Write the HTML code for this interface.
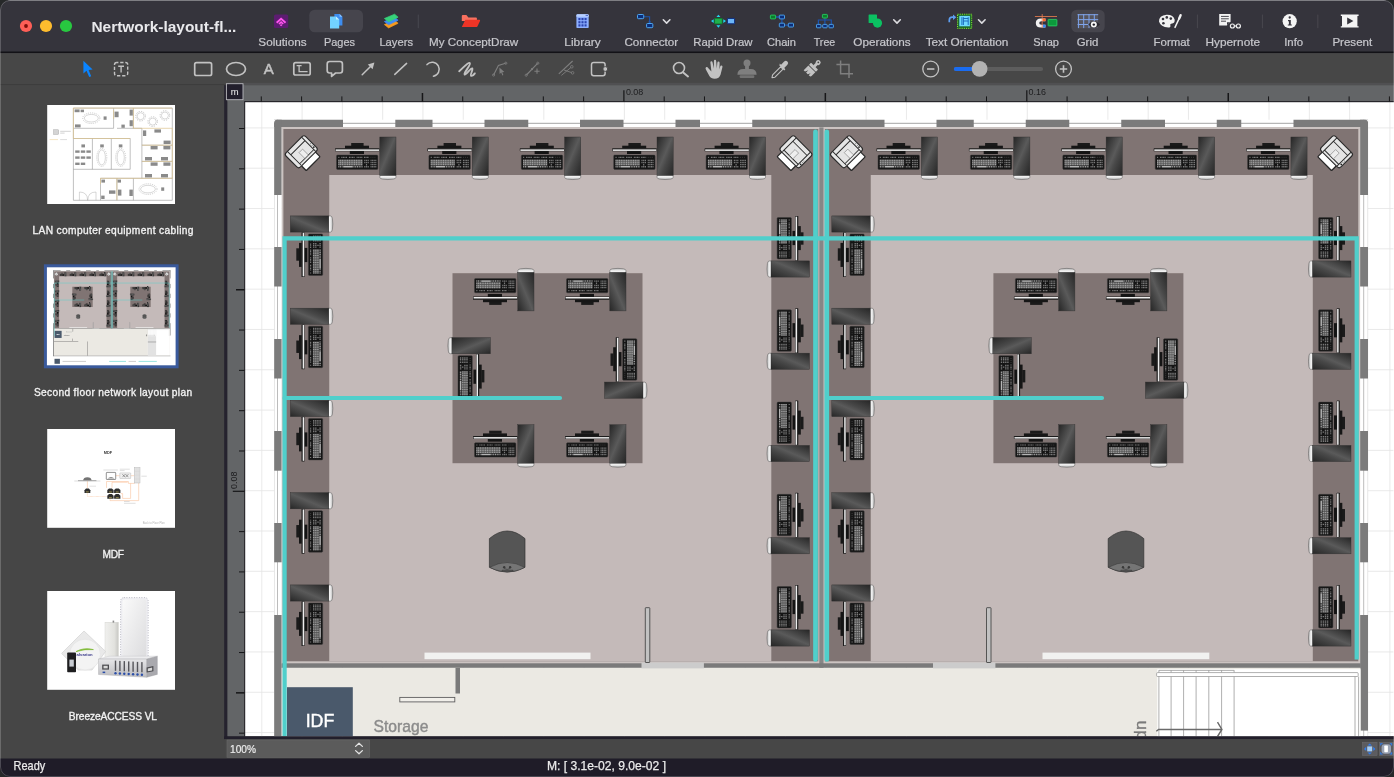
<!DOCTYPE html>
<html lang="en"><head><meta charset="utf-8"><title>Nertwork-layout-floor-plan</title>
<style>
html,body{margin:0;padding:0;background:#262829;}
body{width:1394px;height:777px;overflow:hidden;position:relative;}
svg{display:block;position:absolute;left:0;top:0;will-change:transform;}
text{font-family:"Liberation Sans",sans-serif;}
.lbl{font-size:11.3px;fill:#c6c6cb;text-anchor:middle;stroke:#c6c6cb;stroke-width:0.22px;}
.side{font-size:10.2px;fill:#f2f2f2;text-anchor:middle;stroke:#f2f2f2;stroke-width:0.33px;}
.rul{font-size:9.4px;fill:#1d1d1f;}
</style></head>
<body>
<svg width="1394" height="777" viewBox="0 0 1394 777">
<defs><clipPath id="win"><rect x="0" y="0" width="1394" height="777" rx="10" ry="10"/></clipPath><clipPath id="cv"><rect x="245" y="102" width="1148.5" height="634.3"/></clipPath></defs>
<g clip-path="url(#win)">
<rect x="0" y="0" width="1394" height="777" fill="#474747"/>
<rect x="0" y="0" width="1394" height="52" fill="#35343c"/>
<rect x="8" y="0" width="1378" height="1" fill="#5e5e64"/>
<rect x="0" y="51.5" width="1394" height="1.8" fill="#131217"/>
<rect x="0" y="53.2" width="1394" height="31.4" fill="#474747"/>
<rect x="0" y="84.3" width="1394" height="1" fill="#3a3a3a"/>
<rect x="0" y="85.2" width="224.2" height="673.3" fill="#464646"/>
<rect x="224.2" y="85.2" width="3.3" height="654" fill="#25222e"/>
<rect x="245" y="102" width="1149" height="634.3" fill="#ffffff"/>
<g stroke="#e3e3e3" stroke-width="0.8" clip-path="url(#cv)"><line x1="261.79" y1="102" x2="261.79" y2="737"/><line x1="302.08" y1="102" x2="302.08" y2="737"/><line x1="342.37" y1="102" x2="342.37" y2="737"/><line x1="382.66" y1="102" x2="382.66" y2="737"/><line x1="422.95" y1="102" x2="422.95" y2="737"/><line x1="463.24" y1="102" x2="463.24" y2="737"/><line x1="503.53" y1="102" x2="503.53" y2="737"/><line x1="543.82" y1="102" x2="543.82" y2="737"/><line x1="584.11" y1="102" x2="584.11" y2="737"/><line x1="624.40" y1="102" x2="624.40" y2="737"/><line x1="664.69" y1="102" x2="664.69" y2="737"/><line x1="704.98" y1="102" x2="704.98" y2="737"/><line x1="745.27" y1="102" x2="745.27" y2="737"/><line x1="785.56" y1="102" x2="785.56" y2="737"/><line x1="825.85" y1="102" x2="825.85" y2="737"/><line x1="866.14" y1="102" x2="866.14" y2="737"/><line x1="906.43" y1="102" x2="906.43" y2="737"/><line x1="946.72" y1="102" x2="946.72" y2="737"/><line x1="987.01" y1="102" x2="987.01" y2="737"/><line x1="1027.30" y1="102" x2="1027.30" y2="737"/><line x1="1067.59" y1="102" x2="1067.59" y2="737"/><line x1="1107.88" y1="102" x2="1107.88" y2="737"/><line x1="1148.17" y1="102" x2="1148.17" y2="737"/><line x1="1188.46" y1="102" x2="1188.46" y2="737"/><line x1="1228.75" y1="102" x2="1228.75" y2="737"/><line x1="1269.04" y1="102" x2="1269.04" y2="737"/><line x1="1309.33" y1="102" x2="1309.33" y2="737"/><line x1="1349.62" y1="102" x2="1349.62" y2="737"/><line x1="1389.91" y1="102" x2="1389.91" y2="737"/><line x1="245" y1="127.91" x2="1394" y2="127.91"/><line x1="245" y1="168.22" x2="1394" y2="168.22"/><line x1="245" y1="208.53" x2="1394" y2="208.53"/><line x1="245" y1="248.84" x2="1394" y2="248.84"/><line x1="245" y1="289.15" x2="1394" y2="289.15"/><line x1="245" y1="329.46" x2="1394" y2="329.46"/><line x1="245" y1="369.77" x2="1394" y2="369.77"/><line x1="245" y1="410.08" x2="1394" y2="410.08"/><line x1="245" y1="450.39" x2="1394" y2="450.39"/><line x1="245" y1="490.70" x2="1394" y2="490.70"/><line x1="245" y1="531.01" x2="1394" y2="531.01"/><line x1="245" y1="571.32" x2="1394" y2="571.32"/><line x1="245" y1="611.63" x2="1394" y2="611.63"/><line x1="245" y1="651.94" x2="1394" y2="651.94"/><line x1="245" y1="692.25" x2="1394" y2="692.25"/><line x1="245" y1="732.56" x2="1394" y2="732.56"/></g>
<defs><linearGradient id="gTow" x1="0" y1="0" x2="1" y2="1"><stop offset="0" stop-color="#262626"/><stop offset="0.47" stop-color="#5a5a5a"/><stop offset="0.62" stop-color="#484848"/><stop offset="1" stop-color="#262626"/></linearGradient><linearGradient id="gCap" x1="0" y1="0" x2="0" y2="1"><stop offset="0" stop-color="#8a8a8a"/><stop offset="0.3" stop-color="#f6f6f6"/><stop offset="0.65" stop-color="#e2e2e2"/><stop offset="1" stop-color="#a8a8a8"/></linearGradient><linearGradient id="gBar" x1="0" y1="0" x2="0" y2="1"><stop offset="0" stop-color="#2a2a2a"/><stop offset="0.3" stop-color="#8a8a8a"/><stop offset="0.55" stop-color="#f4f4f4"/><stop offset="1" stop-color="#d0d0d0"/></linearGradient><g id="ws"><rect x="16.2" y="6.1" width="12.4" height="3" fill="#1a1a1a"/><rect x="10" y="8.8" width="24" height="2.8" fill="#161616"/><rect x="14.8" y="14" width="14.2" height="3.1" fill="#141414"/><rect x="0" y="11.3" width="44.6" height="3.1" rx="0.5" fill="#1c1c1c"/><rect x="0.6" y="12.5" width="43.6" height="1.5" fill="#ededed"/><rect x="1.5" y="18.2" width="41.4" height="14.3" rx="1" fill="#151515" stroke="#3c3c3c" stroke-width="0.5"/><g stroke="#787878" fill="none"><path d="M3.3 20.4H4.4M6.3 20.4H12.2M13.9 20.4H20M21.6 20.4H27.6M29 20.4H34" stroke-width="1.2" stroke-dasharray="1.1 0.45"/><path d="M35.6 20.4H41" stroke-width="0.7" stroke-dasharray="0.7 1.3" stroke="#666"/><rect x="3.3" y="22.7" width="24.4" height="6" fill="#4e4e4e" stroke="none"/><path d="M3.3 23.5H27.7M3.3 25.6H27.7M3.3 27.7H27.7" stroke-width="1.5" stroke-dasharray="1.15 0.6" stroke="#9c9c9c"/><path d="M3.3 29.9H7.6M18.4 29.9H27.7" stroke-width="1.5" stroke-dasharray="1.15 0.6" stroke="#9c9c9c"/><path d="M8.2 29.9H17.8" stroke-width="1.5" stroke="#b4b4b4"/><path d="M29.2 23.5H33.9M29.2 25.6H33.9M30.9 27.8H32.3M29.2 29.9H33.9" stroke-width="1.4" stroke-dasharray="1.2 0.5"/><path d="M35.5 23.5H41.4M35.5 25.6H41.4M35.5 27.7H41.4M35.5 29.9H41.4" stroke-width="1.4" stroke-dasharray="1.15 0.42"/></g><path d="M44.9 37.6V40.5Q44.9 41.8 47.5 42.2Q52.9 43.1 58.3 42.2Q60.9 41.8 60.9 40.5V37.6Z" fill="url(#gCap)" stroke="#5a5a5a" stroke-width="0.5"/><rect x="44.8" y="0.1" width="16.2" height="38.5" fill="url(#gTow)" stroke="#303030" stroke-width="0.4"/></g><g id="pr" stroke="#2a2a2a" stroke-width="1.1" stroke-linejoin="round"><rect x="9" y="-9.8" width="7.8" height="19.6" rx="0.9" fill="#ffffff" stroke-width="1.35"/><rect x="-10.15" y="-13.85" width="20.3" height="27.7" rx="2.6" fill="#e5e5e5"/><path d="M-10.15 -10.5H10.15M-10.15 9.6H9.4M-5.3 -10.5V9.6M7.3 -10.5V9.6" fill="none" stroke-width="0.95"/><path d="M6.9 -2.8H-1V2.2H6.9" fill="#eeeeee" stroke="#7c7c7c" stroke-width="0.6"/><circle cx="0.9" cy="-12.2" r="0.45" fill="#555" stroke="none"/><circle cx="3.1" cy="-12.2" r="0.45" fill="#555" stroke="none"/><circle cx="5.5" cy="-12.2" r="0.85" fill="#222" stroke="none"/></g><g id="cyl"><path d="M0 7.6 Q17.8 -7.6 35.6 7.6 V36.3 Q17.8 46 0 36.3 Z" fill="#555555" stroke="#333" stroke-width="0.7"/><path d="M0.3 36.3 Q17.8 26.8 35.3 36.3 Q31 39.2 23.6 40.4 V39.2 H12.6 V40.4 Q5 39.2 0.3 36.3 Z" fill="#757575" stroke="#333" stroke-width="0.5"/><circle cx="14.8" cy="36.2" r="1.2" fill="#3a3a3a"/><circle cx="20.7" cy="36.2" r="1.2" fill="#3a3a3a"/><path d="M14.8 37.4 Q17.8 39.6 20.7 37.4" fill="none" stroke="#3a3a3a" stroke-width="0.6"/></g></defs>
<g clip-path="url(#cv)"><g id="planG">
<rect x="274.2" y="119.75" width="1093.8" height="7.25" fill="#ffffff"/><path d="M274.2 123.3H1368" stroke="#9a9a9a" stroke-width="0.9"/><rect x="274.2" y="119.75" width="7.5" height="805.25" fill="#ffffff"/><path d="M277.5 119.75V736" stroke="#b4b4b4" stroke-width="0.9"/><path d="M274.5 119.75V736" stroke="#d8d8d8" stroke-width="0.6"/><rect x="1360.1" y="119.75" width="7.9" height="616.65" fill="#ffffff"/><path d="M1363.7 119.75V736" stroke="#b4b4b4" stroke-width="0.9"/><path d="M1367.7 119.75V736" stroke="#d8d8d8" stroke-width="0.6"/>
<rect x="274.2" y="119.75" width="68.8" height="7.25" fill="#7b7b7b"/><rect x="395.3" y="119.75" width="37.2" height="7.25" fill="#7b7b7b"/><rect x="484.5" y="119.75" width="43.75" height="7.25" fill="#7b7b7b"/><rect x="580" y="119.75" width="43.5" height="7.25" fill="#7b7b7b"/><rect x="675.5" y="119.75" width="24.5" height="7.25" fill="#7b7b7b"/><rect x="752.25" y="119.75" width="132.25" height="7.25" fill="#7b7b7b"/><rect x="936.5" y="119.75" width="37.25" height="7.25" fill="#7b7b7b"/><rect x="1025.75" y="119.75" width="43.5" height="7.25" fill="#7b7b7b"/><rect x="1121.25" y="119.75" width="43.75" height="7.25" fill="#7b7b7b"/><rect x="1216.75" y="119.75" width="24.5" height="7.25" fill="#7b7b7b"/><rect x="1293.5" y="119.75" width="74.5" height="7.25" fill="#7b7b7b"/><rect x="274.2" y="119.75" width="7.5" height="75.25" fill="#7b7b7b"/><rect x="1360.1" y="119.75" width="7.9" height="75.25" fill="#7b7b7b"/><rect x="274.2" y="247" width="7.5" height="39.5" fill="#7b7b7b"/><rect x="1360.1" y="247" width="7.9" height="39.5" fill="#7b7b7b"/><rect x="274.2" y="339" width="7.5" height="39.5" fill="#7b7b7b"/><rect x="1360.1" y="339" width="7.9" height="39.5" fill="#7b7b7b"/><rect x="274.2" y="431" width="7.5" height="39.7" fill="#7b7b7b"/><rect x="1360.1" y="431" width="7.9" height="39.7" fill="#7b7b7b"/><rect x="274.2" y="523" width="7.5" height="39.3" fill="#7b7b7b"/><rect x="1360.1" y="523" width="7.9" height="39.3" fill="#7b7b7b"/><rect x="274.2" y="615" width="7.5" height="310" fill="#7b7b7b"/><rect x="1360.1" y="615" width="7.9" height="115.6" fill="#7b7b7b"/><path d="M274 119.5H277.6Q274.2 119.75 274 123.2Z" fill="#ffffff"/><path d="M1368.2 119.5H1364.6Q1368 119.75 1368.2 123.2Z" fill="#ffffff"/>
<rect x="281.7" y="127" width="1078.4" height="537" fill="#cbc3c1"/><rect x="281.7" y="667.8" width="1078.8" height="253.2" fill="#ebe9e3"/><rect x="274.2" y="921" width="1093.8" height="4" fill="#7b7b7b"/><rect x="283.4" y="129" width="534.9" height="532.3" fill="#807473"/><rect x="329.25" y="175" width="442.05" height="486.3" fill="#c4bab9"/><rect x="452.5" y="273.2" width="190" height="190" fill="#807473"/><rect x="824.9" y="129" width="533.4" height="532.3" fill="#807473"/><rect x="870.75" y="175" width="442.05" height="486.3" fill="#c4bab9"/><rect x="993.4" y="273.2" width="190" height="190" fill="#807473"/><rect x="819.3" y="127.4" width="4.2" height="540.4" fill="#868686"/>
<rect x="424.5" y="652.6" width="166" height="6.6" fill="#f1f1f0"/><rect x="1042.5" y="652.6" width="166.8" height="6.6" fill="#f1f1f0"/><rect x="281.7" y="663.3" width="1078.8" height="4.5" fill="#7a7a7a"/><rect x="641.5" y="662.6" width="62.4" height="5.8" fill="#cccccc"/><rect x="933" y="662.6" width="62.4" height="5.8" fill="#cccccc"/><rect x="645.3" y="607.7" width="4.5" height="54.8" rx="0.5" fill="#c2c2c2" stroke="#484848" stroke-width="0.9"/><rect x="986.5" y="607.7" width="4.5" height="54.8" rx="0.5" fill="#c2c2c2" stroke="#484848" stroke-width="0.9"/><rect x="455.5" y="667.8" width="4.5" height="25.7" fill="#7a7a7a"/><rect x="399.8" y="697.4" width="55" height="4.5" fill="#f1efea" stroke="#5e5e5e" stroke-width="0.9"/><rect x="281.7" y="783" width="226.3" height="4.5" fill="#7a7a7a"/><rect x="592" y="787" width="4.5" height="134" fill="#7a7a7a"/><rect x="452" y="760" width="4.5" height="23" fill="#7a7a7a"/><rect x="287" y="687.2" width="65.8" height="66.8" fill="#4a596b"/><text x="320" y="727.1" font-size="18.6" fill="#ffffff" stroke="#ffffff" stroke-width="0.45" text-anchor="middle" textLength="28.6" lengthAdjust="spacingAndGlyphs">IDF</text><text x="373.6" y="732" font-size="16.2" fill="#8b8b8b" stroke="#8b8b8b" stroke-width="0.4" textLength="54.8" lengthAdjust="spacingAndGlyphs">Storage</text>
<rect x="1157.3" y="669.2" width="203.2" height="247.8" fill="#ffffff"/><rect x="1157.3" y="737" width="76.8" height="180" fill="#e2e2e2"/><rect x="1157.3" y="783" width="76.8" height="17" fill="#c4c4c4"/><g stroke="#9a9a9a" stroke-width="0.8" fill="none"><path d="M1158.9 670.2V736.4"/><path d="M1171.1 670.2V736.4"/><path d="M1183.6 670.2V736.4"/><path d="M1196.1 670.2V736.4"/><path d="M1208.8 670.2V736.4"/><path d="M1221.6 670.2V736.4"/><path d="M1234.1 670.2V736.4"/><path d="M1158.9 670.4H1234.1"/><rect x="1156.6" y="672.6" width="201.6" height="3.9" rx="1" fill="#ffffff"/><path d="M1355 676.5V736.4M1358.6 676.5V736.4"/></g><path d="M1156.3 731.2L1158.6 729.4H1221.9M1217.5 722.2L1221.9 729.4L1217.5 736.5" fill="none" stroke="#6a6a6a" stroke-width="1.45"/><text transform="translate(1136.9,720.6) rotate(90)" font-size="17.2" fill="#7a7a7a" stroke="#7a7a7a" stroke-width="0.35">up</text>
<use href="#ws" transform="translate(335,136.9)"/><use href="#ws" transform="translate(427.4,136.9)"/><use href="#ws" transform="translate(519.8,136.9)"/><use href="#ws" transform="translate(612.2,136.9)"/><use href="#ws" transform="translate(704.6,136.9)"/><use href="#ws" transform="translate(290.2,276.9) rotate(-90)"/><use href="#ws" transform="translate(290.2,369.15) rotate(-90)"/><use href="#ws" transform="translate(290.2,461.4) rotate(-90)"/><use href="#ws" transform="translate(290.2,553.65) rotate(-90)"/><use href="#ws" transform="translate(290.2,645.9) rotate(-90)"/><use href="#ws" transform="translate(809.6,216.1) rotate(90)"/><use href="#ws" transform="translate(809.6,308.35) rotate(90)"/><use href="#ws" transform="translate(809.6,400.6) rotate(90)"/><use href="#ws" transform="translate(809.6,492.85) rotate(90)"/><use href="#ws" transform="translate(809.6,585.1) rotate(90)"/><use href="#ws" transform="translate(473,311) scale(1,-1)"/><use href="#ws" transform="translate(565,311) scale(1,-1)"/><use href="#ws" transform="translate(473,424.6)"/><use href="#ws" transform="translate(565,424.6)"/><use href="#ws" transform="matrix(0,-1,-1,0,490.5,398.6)"/><use href="#ws" transform="matrix(0,1,1,0,604.4,337.25)"/>
<use href="#ws" transform="translate(876.5,136.9)"/><use href="#ws" transform="translate(968.9,136.9)"/><use href="#ws" transform="translate(1061.3,136.9)"/><use href="#ws" transform="translate(1153.7,136.9)"/><use href="#ws" transform="translate(1246.1,136.9)"/><use href="#ws" transform="translate(831.7,276.9) rotate(-90)"/><use href="#ws" transform="translate(831.7,369.15) rotate(-90)"/><use href="#ws" transform="translate(831.7,461.4) rotate(-90)"/><use href="#ws" transform="translate(831.7,553.65) rotate(-90)"/><use href="#ws" transform="translate(831.7,645.9) rotate(-90)"/><use href="#ws" transform="translate(1351.1,216.1) rotate(90)"/><use href="#ws" transform="translate(1351.1,308.35) rotate(90)"/><use href="#ws" transform="translate(1351.1,400.6) rotate(90)"/><use href="#ws" transform="translate(1351.1,492.85) rotate(90)"/><use href="#ws" transform="translate(1351.1,585.1) rotate(90)"/><use href="#ws" transform="translate(1013.9,311) scale(1,-1)"/><use href="#ws" transform="translate(1105.9,311) scale(1,-1)"/><use href="#ws" transform="translate(1013.9,424.6)"/><use href="#ws" transform="translate(1105.9,424.6)"/><use href="#ws" transform="matrix(0,-1,-1,0,1031.4,398.6)"/><use href="#ws" transform="matrix(0,1,1,0,1145.3,337.25)"/>
<use href="#pr" transform="translate(301.3,151.8) rotate(45)"/><use href="#pr" transform="translate(795.9,151.8) rotate(135)"/><use href="#pr" transform="translate(846.5,151.8) rotate(45)"/><use href="#pr" transform="translate(1336.5,151.8) rotate(135)"/><use href="#cyl" transform="translate(489.4,531)"/><use href="#cyl" transform="translate(1108.2,531)"/>
<g stroke="#50cfcb" stroke-width="4.2" fill="none" stroke-linecap="round"><path d="M284.6 736.4V238.35H1356.7V659.6" stroke-linecap="butt" stroke-linejoin="miter"/><path d="M284.6 398H560"/><path d="M827 398H1102"/><path d="M815.5 131.8V659.4" stroke-width="4.7"/><path d="M826.8 131.8V659.4" stroke-width="4.6"/></g>
</g></g>
<rect x="47.2" y="105" width="127.8" height="99" fill="#ffffff"/><g fill="none" stroke="#8e8e8e" stroke-width="0.55"><path d="M73.4 108.1H172.3V200.3H73.4Z"/><path d="M73.4 128.3H113.6M113.6 108.1V128.3M117 128.3H141.9M133.4 108.1V128.3"/><path d="M73.4 138.5H130.2V169.3H73.4M92.4 138.5V169.3M111.3 138.5V169.3"/><path d="M141.9 128.3V178.3M141.9 145.2H172.3M141.9 161.4H172.3M100.5 178.3H172.3M100.5 178.3V200.3M116.9 178.3V200.3M133.4 178.3V200.3"/><path d="M79.4 200.3V192Q87.6 192 87.6 200.3M96 200.3V192Q87.8 192 87.8 200.3" stroke-width="0.35"/></g><g fill="none" stroke="#dcc48e" stroke-width="0.7"><path d="M73.4 138.5V108.1H172.3M133.4 108.1V128.3H172.3V178.3H100.5V184"/><path d="M73.4 138.5H130.2M141.9 145.2H172.3M141.9 161.4H172.3M116.9 178.3V200.3M113.6 110V119"/></g><g fill="none" stroke="#a8a8a8" stroke-width="0.45"><ellipse cx="91.3" cy="118.2" rx="7" ry="3.8"/><ellipse cx="91.3" cy="118.2" rx="8.6" ry="5.3" stroke-dasharray="1.1 1" stroke-width="0.8" stroke="#c0c0c0"/><circle cx="140.6" cy="116.2" r="3.5"/><circle cx="140.6" cy="116.2" r="4.8" stroke-dasharray="1.2 1.3" stroke-width="0.9" stroke="#bcbcbc"/><circle cx="152.7" cy="121.6" r="3.5"/><circle cx="152.7" cy="121.6" r="4.8" stroke-dasharray="1.2 1.3" stroke-width="0.9" stroke="#bcbcbc"/><circle cx="164.9" cy="115.5" r="3.5"/><circle cx="164.9" cy="115.5" r="4.8" stroke-dasharray="1.2 1.3" stroke-width="0.9" stroke="#bcbcbc"/><ellipse cx="101.8" cy="157.4" rx="3.6" ry="7.6"/><ellipse cx="101.8" cy="157.4" rx="5" ry="9" stroke-dasharray="1.1 1" stroke-width="0.8" stroke="#c0c0c0"/><ellipse cx="120.7" cy="157.4" rx="3.6" ry="7.6"/><ellipse cx="120.7" cy="157.4" rx="5" ry="9" stroke-dasharray="1.1 1" stroke-width="0.8" stroke="#c0c0c0"/><ellipse cx="148" cy="189.1" rx="7.4" ry="3.8"/><ellipse cx="148" cy="189.1" rx="9" ry="5.3" stroke-dasharray="1.1 1" stroke-width="0.8" stroke="#c0c0c0"/></g><g fill="#6a6a6a" opacity="0.78"><rect x="74.6" y="109.4" width="5" height="2.8"/><rect x="80.6" y="109.6" width="3.4" height="2.6"/><rect x="75" y="124.4" width="5.6" height="3"/><rect x="103.6" y="116.4" width="3" height="3.4"/><rect x="114.6" y="111.6" width="4" height="5.6"/><rect x="129.6" y="109.6" width="3.2" height="6"/><rect x="129.6" y="120.2" width="3.2" height="6"/><rect x="121.4" y="124.6" width="3.4" height="3.2"/><rect x="81.4" y="144.4" width="3.6" height="3"/><rect x="100.2" y="144.4" width="3.6" height="3"/><rect x="118.8" y="144.4" width="3.6" height="3"/><rect x="75.2" y="150.4" width="4.4" height="2.4"/><rect x="80.8" y="150.4" width="4.4" height="2.4"/><rect x="86.4" y="150.4" width="4.4" height="2.4"/><rect x="75.2" y="156.4" width="4.4" height="2.4"/><rect x="80.8" y="156.4" width="4.4" height="2.4"/><rect x="86.4" y="156.4" width="4.4" height="2.4"/><rect x="75.2" y="162.6" width="4.4" height="2.4"/><rect x="80.8" y="162.6" width="4.4" height="2.4"/><rect x="143" y="130.4" width="3.2" height="5.6"/><rect x="154.4" y="129.4" width="6.6" height="3.2"/><rect x="163.6" y="140.6" width="7" height="3.4"/><rect x="150.6" y="146" width="7" height="3.4"/><rect x="163.4" y="146" width="7" height="3.4"/><rect x="145" y="157" width="7" height="3.4"/><rect x="161" y="157" width="7" height="3.4"/><rect x="150.6" y="162.4" width="7" height="3.4"/><rect x="163.4" y="162.4" width="7" height="3.4"/><rect x="145" y="174" width="7" height="3.4"/><rect x="161" y="174" width="7" height="3.4"/><rect x="101.4" y="179.6" width="3.6" height="3"/><rect x="117.6" y="179.6" width="3.4" height="3"/><rect x="109" y="190.4" width="6.4" height="3.4"/><rect x="118" y="189.6" width="3.4" height="6"/><rect x="129.4" y="189.6" width="3.4" height="6.4"/><rect x="101.2" y="195.6" width="3.4" height="3.4"/><rect x="161.2" y="187.4" width="3" height="3.4"/></g><rect x="53.6" y="129.8" width="5" height="4.6" fill="#d4d4d4" stroke="#9a9a9a" stroke-width="0.4"/><path d="M60.2 131.3H70.8M60.2 133.1H64.6" stroke="#b4b4b4" stroke-width="0.6"/><path d="M49.6 139.6H58" stroke="#ecd29a" stroke-width="0.6"/><path d="M60.2 139.6H67" stroke="#c4c4c4" stroke-width="0.6"/>
<text class="side" x="113.0" y="234.2" textLength="161.0" lengthAdjust="spacing">LAN computer equipment cabling</text>
<rect x="45.4" y="265.8" width="131.7" height="101" fill="#ffffff" stroke="#3a5a9c" stroke-width="3"/><clipPath id="t2c"><rect x="47" y="267.3" width="128.4" height="98"/></clipPath><g clip-path="url(#t2c)"><use href="#planG" transform="translate(23.81,257.65) scale(0.1072,0.1065)"/></g><rect x="54.5" y="358.8" width="5.4" height="5" fill="#4a596b"/><path d="M62.6 361.4H86" stroke="#9a9a9a" stroke-width="0.5"/><path d="M109.2 361.4H126M138.6 361.4H156.8" stroke="#50cfcb" stroke-width="0.6"/><path d="M128.6 361.4H136" stroke="#9a9a9a" stroke-width="0.5"/>
<text class="side" x="113.0" y="395.6" textLength="158.2" lengthAdjust="spacing">Second floor network layout plan</text>
<rect x="47.2" y="429" width="127.8" height="98.8" fill="#ffffff"/><text x="107.9" y="453.5" font-size="3.9" fill="#3a3a3a" text-anchor="middle" font-weight="bold">MDF</text><g fill="none" stroke="#f8b98c" stroke-width="0.5"><path d="M87.4 481V488.3M115.8 475.7H119.7M130.8 475.7H134.2"/><path d="M87.4 493.1V496.5H107.2" stroke-dasharray="0.7 0.5"/><path d="M106.5 487.8V481.5H128.4V483.4H134.7M112 487.8V482.3H127.6"/><path d="M120.7 493.6H122.6V498.4H130.6V483.4M110 498.9V500.6H138.7V483"/></g><path d="M74.3 481H100.4" stroke="#a8a8a8" stroke-width="0.4"/><path d="M83 480.6Q83.4 477.2 87.4 477.2Q91.3 477.2 91.7 480.6Z" fill="#747474"/><rect x="78" y="480.3" width="18.4" height="0.8" fill="#9a9a9a"/><path d="M84.5 493.1V490.2L86 488.6H88.8L90.3 490.2V493.1Z" fill="#2e2e2e"/><rect x="86" y="491.4" width="2.8" height="1" fill="#9a8f50"/><path d="M89.4 486.2H96" stroke="#b4b4b4" stroke-width="0.4"/><path d="M107.3 493.1V490.0L109.0 488.4H111.9L113.6 490.0V493.1Z" fill="#2e2e2e"/><rect x="109.0" y="491.5" width="2.9" height="1" fill="#9a8f50"/><path d="M114.1 493.1V490.0L115.8 488.4H118.7L120.4 490.0V493.1Z" fill="#2e2e2e"/><rect x="115.8" y="491.5" width="2.9" height="1" fill="#9a8f50"/><path d="M107.3 498.8V495.7L109.0 494.1H111.9L113.6 495.7V498.8Z" fill="#2e2e2e"/><rect x="109.0" y="497.2" width="2.9" height="1" fill="#9a8f50"/><path d="M114.1 498.8V495.7L115.8 494.1H118.7L120.4 495.7V498.8Z" fill="#2e2e2e"/><rect x="115.8" y="497.2" width="2.9" height="1" fill="#9a8f50"/><rect x="106.3" y="472.4" width="9.4" height="7.1" rx="0.6" fill="#ffffff" stroke="#4a4a4a" stroke-width="0.6"/><path d="M107.4 478.6Q111 475.4 114.6 478.6Z" fill="#8a8a8a"/><rect x="119.8" y="472.9" width="10.9" height="5.6" rx="0.5" fill="#f0f0f0" stroke="#b0b0b0" stroke-width="0.45"/><path d="M122.4 474.2L125.2 477.2M125.2 474.2L122.4 477.2M125.6 474.2L128.4 477.2M128.4 474.2L125.6 477.2" stroke="#4a4a4a" stroke-width="0.5" fill="none"/><path d="M103.4 470H117.8M119.8 469.2H129.8M119.8 470.6H124.6" stroke="#b8b8b8" stroke-width="0.45"/><rect x="134.3" y="467.6" width="5.7" height="15.4" fill="#e4e4e4" stroke="#b4b4b4" stroke-width="0.45"/><path d="M136.2 467.6V483M138.1 467.6V483M134.3 471.4H140M134.3 475.2H140M134.3 479H140" stroke="#cfcfcf" stroke-width="0.3"/><path d="M141.4 476.2H146.8" stroke="#b8b8b8" stroke-width="0.45"/><path d="M124 501.5H129.6M124 503.3H135.6" stroke="#b8b8b8" stroke-width="0.45"/><text x="164.8" y="523.6" font-size="2.7" fill="#b4b4b4" text-anchor="end">Back to Floor Plan</text>
<text class="side" x="113.2" y="557.8" textLength="21.6" lengthAdjust="spacing">MDF</text>
<defs><linearGradient id="t4a" x1="0" y1="0" x2="1" y2="1"><stop offset="0" stop-color="#fafafa"/><stop offset="1" stop-color="#dcdcde"/></linearGradient><linearGradient id="t4b" x1="0" y1="0" x2="1" y2="0"><stop offset="0" stop-color="#f0f0ee"/><stop offset="0.7" stop-color="#e2e2de"/><stop offset="1" stop-color="#c8c8c4"/></linearGradient><linearGradient id="t4c" x1="0" y1="0" x2="0" y2="1"><stop offset="0" stop-color="#e6e6e8"/><stop offset="1" stop-color="#bcbcc0"/></linearGradient></defs><rect x="47.2" y="591" width="127.8" height="98.8" fill="#ffffff"/><rect x="120.6" y="597.6" width="27.6" height="61.4" rx="3.4" fill="#eeeef2" stroke="#a9a9b4" stroke-width="0.9" stroke-dasharray="0.8 1.7"/><rect x="122.4" y="599.4" width="24" height="57.8" rx="2.6" fill="url(#t4a)"/><rect x="105" y="622.2" width="13.4" height="36" fill="url(#t4b)" stroke="#cfcfcb" stroke-width="0.4"/><rect x="112.6" y="620.6" width="1.6" height="2" fill="#8a8a8a"/><path d="M84 631L105.6 651.4L92 670H78.4L61.6 653.4Z" fill="#e9e9e9" stroke="#cdcdcd" stroke-width="0.6" stroke-linejoin="round"/><circle cx="85" cy="654.6" r="15.4" fill="#f3f3f3" stroke="#e0e0e0" stroke-width="0.5"/><path d="M76 651.6Q84 647 93.4 649.6Q85.4 648.8 76 651.6Z" fill="#7ab82e" stroke="#7ab82e" stroke-width="0.7"/><text x="84.6" y="655.8" font-size="4.2" font-weight="bold" fill="#3a3a8a" text-anchor="middle">alvarion</text><rect x="67.2" y="652.4" width="8.8" height="19.8" rx="0.8" fill="#1e1e20"/><rect x="69.4" y="659.6" width="4.4" height="7" fill="#c8ccd2"/><path d="M98.5 659L109 656.2H157.4L146.8 659Z" fill="#ececee" stroke="#b8b8bc" stroke-width="0.3"/><path d="M98.5 659H146.8V677.3L98.5 674.5Z" fill="url(#t4c)" stroke="#a8a8ac" stroke-width="0.4"/><path d="M146.8 659L157.4 656.2V674.4L146.8 677.3Z" fill="#a9a9ae" stroke="#98989c" stroke-width="0.3"/><rect x="102.2" y="664.6" width="6.8" height="5" fill="#4a4a4e"/><rect x="103.5" y="665.8" width="4.2" height="2.6" fill="#d8d8d8"/><path d="M146.6 667.4L153.4 666V671.2L146.6 672.6Z" fill="#4a4a4e"/><path d="M147.8 668.4L152.2 667.5V670.4L147.8 671.3Z" fill="#d8d8d8"/><rect x="114.8" y="660.6" width="1.4" height="10.2" fill="#55555a"/><circle cx="115.5" cy="673.2" r="1.2" fill="#2a4ea8"/><rect x="119.2" y="660.9" width="1.4" height="10.2" fill="#55555a"/><circle cx="119.9" cy="673.5" r="1.2" fill="#2a4ea8"/><rect x="123.6" y="661.1" width="1.4" height="10.2" fill="#55555a"/><circle cx="124.3" cy="673.7" r="1.2" fill="#2a4ea8"/><rect x="128.0" y="661.4" width="1.4" height="10.2" fill="#55555a"/><circle cx="128.7" cy="674.0" r="1.2" fill="#2a4ea8"/><rect x="132.4" y="661.6" width="1.4" height="10.2" fill="#55555a"/><circle cx="133.1" cy="674.2" r="1.2" fill="#2a4ea8"/><rect x="136.8" y="661.9" width="1.4" height="10.2" fill="#55555a"/><circle cx="137.5" cy="674.5" r="1.2" fill="#2a4ea8"/><rect x="141.2" y="662.1" width="1.4" height="10.2" fill="#55555a"/><circle cx="141.9" cy="674.7" r="1.2" fill="#2a4ea8"/><rect x="102.6" y="671.6" width="2.6" height="1.5" fill="#2a4ea8"/>
<text class="side" x="112.9" y="720" textLength="88.2" lengthAdjust="spacing">BreezeACCESS VL</text>
<circle cx="26" cy="26" r="6.1" fill="#fe5f57"/><circle cx="26" cy="26" r="1.9" fill="#7d0f0a"/><circle cx="46" cy="26" r="6.1" fill="#febc2e"/><circle cx="66" cy="26" r="6.1" fill="#28c840"/>
<text x="91.4" y="31.7" font-size="15.2" font-weight="bold" fill="#e9e9ec" textLength="145" lengthAdjust="spacingAndGlyphs">Nertwork-layout-fl...</text>
<rect x="274" y="14.4" width="14.2" height="13.6" rx="1.6" fill="#5c1c70"/><path d="M281.1 17.4L286.2 22.1L284.9 23.4L281.1 19.9L277.3 23.4L276 22.1Z" fill="#ff54ee"/><path d="M281.1 20.9L283.8 23.4L282.6 24.5L281.1 23.2L279.6 24.5L278.4 23.4Z" fill="#ff54ee"/><path d="M281.1 24.1L282.3 25.2L281.1 26.3L279.9 25.2Z" fill="#ff54ee"/>
<text class="lbl" x="282.5" y="46.3" textLength="48.4" lengthAdjust="spacingAndGlyphs">Solutions</text>
<rect x="309.3" y="9.7" width="53.7" height="22.6" rx="5.5" fill="#46454d"/><path d="M334.4 14H339.6L342.4 16.8V25.6H334.4Z" fill="#3d8df0"/><path d="M339.6 14V16.8H342.4Z" fill="#8cc4ff"/><path d="M330 16.4H336L339.2 19.6V28.4H330Z" fill="#72d2ff"/><path d="M336 16.4V19.6H339.2Z" fill="#c4ecff"/>
<text class="lbl" x="339.5" y="46.3" textLength="31.2" lengthAdjust="spacingAndGlyphs">Pages</text>
<path d="M384.4 24.6L394.6 20.3L398.1 23.3L388.6 27.9Z" fill="#f59a1e" stroke="#f59a1e" stroke-width="0.7" stroke-linejoin="round"/><path d="M384.4 21.5L394.6 17.2L398.1 20.2L388.6 24.8Z" fill="#3d8bf5" stroke="#3d8bf5" stroke-width="0.7" stroke-linejoin="round"/><path d="M384.4 18.5L394.6 14.2L398.1 17.2L388.6 21.8Z" fill="#36d27a" stroke="#36d27a" stroke-width="0.7" stroke-linejoin="round"/>
<text class="lbl" x="396.2" y="46.3" textLength="33.6" lengthAdjust="spacingAndGlyphs">Layers</text>
<rect x="417.8" y="14.6" width="0.9" height="13.6" fill="#4b4a52"/>
<path d="M461.8 27.1V16Q461.8 15 462.8 15H466.4L468.4 17.4H476Q476.9 17.4 476.9 18.3V21H461.8Z" fill="#f8705f"/><path d="M465.3 19.85H479.3Q480.5 19.85 480 20.95L477.4 26.4Q477 27.1 476.2 27.1H461.8Z" fill="#ee3426"/>
<text class="lbl" x="473.6" y="46.3" textLength="89.2" lengthAdjust="spacingAndGlyphs">My ConceptDraw</text>
<rect x="576.4" y="14.2" width="12.3" height="13.9" rx="1.2" fill="#8eb0ff"/><path d="M576.4 16.7V15.4Q576.4 14.2 577.6 14.2H587.5Q588.7 14.2 588.7 15.4V16.7Z" fill="#b9d1ff"/><rect x="585.6" y="14.9" width="2.4" height="0.9" fill="#3d55b8"/><rect x="578.40" y="18.00" width="2.1" height="2.2" fill="#2b44b0"/><rect x="581.45" y="18.00" width="2.1" height="2.2" fill="#2b44b0"/><rect x="584.50" y="18.00" width="2.1" height="2.2" fill="#2b44b0"/><rect x="578.40" y="21.15" width="2.1" height="2.2" fill="#2b44b0"/><rect x="581.45" y="21.15" width="2.1" height="2.2" fill="#2b44b0"/><rect x="584.50" y="21.15" width="2.1" height="2.2" fill="#2b44b0"/><rect x="578.40" y="24.30" width="2.1" height="2.2" fill="#2b44b0"/><rect x="581.45" y="24.30" width="2.1" height="2.2" fill="#2b44b0"/><rect x="584.50" y="24.30" width="2.1" height="2.2" fill="#2b44b0"/>
<text class="lbl" x="582.5" y="46.3" textLength="36.4" lengthAdjust="spacingAndGlyphs">Library</text>
<path d="M644 16.7H649.6V22.6" fill="none" stroke="#1d55b0" stroke-width="1.1"/><path d="M648 21.6L649.6 23.4L651.2 21.6Z" fill="#1d55b0"/><g fill="#0c2d78" stroke="#4ea9f5" stroke-width="1"><rect x="637.5" y="14.5" width="6.2" height="4.2" rx="0.9"/><rect x="646.6" y="23.5" width="6.2" height="4.2" rx="0.9"/></g>
<path d="M663.3 19.8L666.6 23.1L669.9 19.8" fill="none" stroke="#dcdce0" stroke-width="1.6" stroke-linecap="round" stroke-linejoin="round"/>
<text class="lbl" x="651.3" y="46.3" textLength="53.8" lengthAdjust="spacingAndGlyphs">Connector</text>
<rect x="714.7" y="18.3" width="7.4" height="5.6" fill="#1fb14c" stroke="#0c7c2e" stroke-width="0.7"/><path d="M718.4 14.7l2 2.4h-4zM718.4 27.7l2 -2.4h-4zM711 21.1l2.7 -1.9v3.8zM726 21.1l-2.7 -1.9v3.8z" fill="#23d7f0"/><rect x="727.4" y="18.4" width="7.2" height="5.4" rx="0.5" fill="#6cb6f8" stroke="#0c2d80" stroke-width="1"/>
<text class="lbl" x="722.9" y="46.3" textLength="59.4" lengthAdjust="spacingAndGlyphs">Rapid Draw</text>
<path d="M775.8 17H779M781.9 19.2V23M784.9 25.1H788" fill="none" stroke="#1d55b0" stroke-width="1.3"/><rect x="770.4" y="15.1" width="5.2" height="3.8" rx="0.7" fill="#0d7a2c" stroke="#22d060" stroke-width="0.9"/><g fill="#0c2d78" stroke="#4ea9f5" stroke-width="0.9"><rect x="779.3" y="15.1" width="5.2" height="3.8" rx="0.7"/><rect x="779.3" y="23.2" width="5.2" height="3.8" rx="0.7"/><rect x="788.3" y="23.2" width="5.2" height="3.8" rx="0.7"/></g>
<text class="lbl" x="781.5" y="46.3" textLength="29.0" lengthAdjust="spacingAndGlyphs">Chain</text>
<path d="M824.9 18.2V24M818.4 24V20H831.3V24" fill="none" stroke="#1d55b0" stroke-width="1.2"/><rect x="822.4" y="14.4" width="5" height="3.6" rx="0.7" fill="#0d7a2c" stroke="#22d060" stroke-width="0.9"/><g fill="#0c2d78" stroke="#4ea9f5" stroke-width="0.9"><rect x="816.5" y="24.4" width="4.5" height="3.4" rx="0.7"/><rect x="822.7" y="24.4" width="4.5" height="3.4" rx="0.7"/><rect x="828.9" y="24.4" width="4.5" height="3.4" rx="0.7"/></g>
<text class="lbl" x="824.5" y="46.3" textLength="21.5" lengthAdjust="spacingAndGlyphs">Tree</text>
<rect x="868.6" y="14.5" width="8.4" height="8.6" rx="0.6" fill="#0bc162"/><circle cx="877.5" cy="23.1" r="4.6" fill="#0bc162"/>
<path d="M893.7 19.8L897.0 23.1L900.3 19.8" fill="none" stroke="#dcdce0" stroke-width="1.6" stroke-linecap="round" stroke-linejoin="round"/>
<text class="lbl" x="882.0" y="46.3" textLength="57.3" lengthAdjust="spacingAndGlyphs">Operations</text>
<path d="M949.3 22.2V20.2Q949.3 17.2 952.3 17.2H953.4" fill="none" stroke="#5e9ff2" stroke-width="1.7"/><path d="M953 14.5L956.3 17.2L953 19.9Z" fill="#5e9ff2"/><rect x="957.5" y="14.2" width="14.2" height="14.2" fill="#1d6a2a" stroke="#86ea2e" stroke-width="1" stroke-dasharray="1.1 1.1"/><rect x="959.3" y="15.9" width="10.6" height="10.4" fill="#6fd8ff"/><path d="M961.9 17.2V25M963.4 17.2V25M968.2 17.2V25M963.4 18.5H968.2M963.4 21H968.2" fill="none" stroke="#1463b8" stroke-width="0.9"/>
<path d="M978.5 19.8L981.8 23.1L985.1 19.8" fill="none" stroke="#dcdce0" stroke-width="1.6" stroke-linecap="round" stroke-linejoin="round"/>
<text class="lbl" x="967.0" y="46.3" textLength="82.7" lengthAdjust="spacingAndGlyphs">Text Orientation</text>
<path d="M1045.4 18.4H1040.9Q1035.8 18.4 1035.8 22.95Q1035.8 27.5 1040.9 27.5H1045.4V24.7H1041.4Q1039.2 24.7 1039.2 22.95Q1039.2 21.2 1041.4 21.2H1045.4Z" fill="#f0f0f0"/><rect x="1042.8" y="18.4" width="2.8" height="2.8" fill="#ff6a28"/><rect x="1042.8" y="24.7" width="2.8" height="2.8" fill="#3a8cf5"/><path d="M1034.9 16.5H1057M1042.2 14.1V28.1" stroke="#f08050" stroke-width="0.8" fill="none"/><rect x="1048.1" y="19.4" width="8.8" height="6.5" rx="0.5" fill="#0c9a3c" stroke="#2fd468" stroke-width="0.8"/>
<text class="lbl" x="1046.1" y="46.3" textLength="25.8" lengthAdjust="spacingAndGlyphs">Snap</text>
<rect x="1071.3" y="9.7" width="33.4" height="22.6" rx="5.5" fill="#46454d"/><rect x="1078" y="14.4" width="20" height="13.8" fill="#56555e"/><path d="M1077.6 14.7H1098.2M1077.6 19.6H1098.2M1077.6 24.5H1098.2M1078.4 14.1V28.1M1083.7 14.1V28.1M1089 14.1V28.1M1094.3 14.1V28.1" fill="none" stroke="#7ea4ec" stroke-width="1"/><path d="M1088.2 24.6Q1093.8 17.6 1100 24.6Q1093.8 31.6 1088.2 24.6Z" fill="#2b2a31"/><circle cx="1093.8" cy="24.6" r="3" fill="#f6f6f6"/><circle cx="1093.8" cy="24.6" r="1.2" fill="#1e1d24"/>
<text class="lbl" x="1087.5" y="46.3" textLength="21.5" lengthAdjust="spacingAndGlyphs">Grid</text>
<path d="M1166.6 14.8Q1173.4 14.6 1174.6 19.6Q1175.2 23 1172.2 23.4Q1169.6 23.6 1170.4 25.6Q1170.8 27.6 1168.4 27.6Q1160.6 27.2 1159 21.6Q1158.8 15.6 1166.6 14.8Z" fill="#f2f2f2"/><circle cx="1163" cy="19" r="1.3" fill="#35343c"/><circle cx="1166.8" cy="17.4" r="1.3" fill="#35343c"/><circle cx="1170.8" cy="18.6" r="1.3" fill="#35343c"/><circle cx="1163.4" cy="23.2" r="1.3" fill="#35343c"/><path d="M1175 27.4L1179.2 18.4" stroke="#f2f2f2" stroke-width="1.5" fill="none" stroke-linecap="round"/><path d="M1179.2 18.4L1180.6 15.2" stroke="#f2f2f2" stroke-width="2.4" fill="none" stroke-linecap="round"/>
<text class="lbl" x="1171.7" y="46.3" textLength="36.2" lengthAdjust="spacingAndGlyphs">Format</text>
<rect x="1196.9" y="14.6" width="0.9" height="13.6" fill="#4b4a52"/>
<path d="M1219.2 14H1230.6V21.8L1226.8 25.4H1219.2Z" fill="#f2f2f2"/><path d="M1221 16.4H1228.8M1221 18.8H1228.8M1221 21.2H1226" stroke="#35343c" stroke-width="0.9" fill="none"/><path d="M1227 25.2V22.2H1230.2Z" fill="#35343c"/><circle cx="1232.4" cy="26" r="2" fill="none" stroke="#f2f2f2" stroke-width="1.2"/><circle cx="1238.4" cy="26" r="2" fill="none" stroke="#f2f2f2" stroke-width="1.2"/><path d="M1234.4 26H1236.4" stroke="#f2f2f2" stroke-width="1.2"/>
<text class="lbl" x="1232.8" y="46.3" textLength="54.6" lengthAdjust="spacingAndGlyphs">Hypernote</text>
<rect x="1261.9" y="14.6" width="0.9" height="13.6" fill="#4b4a52"/>
<circle cx="1289.7" cy="21.2" r="7.1" fill="#f4f4f4"/><circle cx="1289.7" cy="17.5" r="1.15" fill="#35343c"/><path d="M1288 20H1290.8V24.4H1291.8V25.6H1287.8V24.4H1288.9V21.2H1288Z" fill="#35343c"/>
<text class="lbl" x="1293.7" y="46.3" textLength="19.0" lengthAdjust="spacingAndGlyphs">Info</text>
<rect x="1317.4" y="14.6" width="0.9" height="13.6" fill="#4b4a52"/>
<path d="M1340.8 14.6H1358.6V16H1357.4V26.2H1358.6V27.6H1340.8V26.2H1342V16H1340.8Z" fill="#f4f4f4"/><path d="M1347.2 17.6L1353.4 21.1L1347.2 24.6Z" fill="#35343c"/>
<text class="lbl" x="1352.3" y="46.3" textLength="39.8" lengthAdjust="spacingAndGlyphs">Present</text>
<path d="M83.4 60.8L92.6 69.4L88.6 69.9L91.2 76.2L89.2 77.1L86.5 70.8L83.4 73.6Z" fill="#0a84ff"/>
<rect x="114.5" y="62.5" width="13.2" height="13.2" rx="2.2" fill="none" stroke="#c2c2c2" stroke-width="1.4" stroke-dasharray="3.3 1.8" stroke-dashoffset="1.6"/><path d="M118.2 66.2H124M121.1 66.2V72.4" fill="none" stroke="#c2c2c2" stroke-width="1.4"/>
<rect x="194.7" y="62.6" width="16.9" height="12.9" rx="1.8" fill="none" stroke="#c2c2c2" stroke-width="1.7"/><ellipse cx="236" cy="69" rx="9.5" ry="6.5" fill="none" stroke="#c2c2c2" stroke-width="1.7"/>
<text x="268.7" y="74.2" font-size="15" fill="#c2c2c2" text-anchor="middle" stroke="#c2c2c2" stroke-width="0.5">A</text>
<rect x="293.8" y="62.6" width="16.4" height="12.4" rx="1.8" fill="none" stroke="#c2c2c2" stroke-width="1.7"/><path d="M296.6 65.6H301.6M299.1 65.6V71.6H307.6" fill="none" stroke="#c2c2c2" stroke-width="1.3"/>
<path d="M329.6 61.5H340Q342.4 61.5 342.4 63.9V70.6Q342.4 73 340 73H335.6L331.6 76.4V73H329.6Q327.2 73 327.2 70.6V63.9Q327.2 61.5 329.6 61.5Z" fill="none" stroke="#c2c2c2" stroke-width="1.7" stroke-linejoin="round"/>
<path d="M362.2 74.8L371 66" stroke="#c2c2c2" stroke-width="1.5" stroke-linecap="round"/><path d="M374.4 62.6L372.6 69.2L367.8 64.4Z" fill="#c2c2c2"/>
<path d="M394.8 74.4L406.6 63.4" stroke="#c2c2c2" stroke-width="1.5" stroke-linecap="round"/>
<path d="M427 64.6A7 7 0 1 1 433.4 76.2" fill="none" stroke="#c2c2c2" stroke-width="1.5" stroke-linecap="round"/>
<path d="M459.2 71.2C463 68 468 62 469.8 63C471.6 64.2 463 73.6 464.6 74.6C466.2 75.6 470.6 67.6 472.2 68.4C473.6 69.2 469.6 75 471.2 75.8C472.4 76.2 474 74.6 474.8 73.4" fill="none" stroke="#c2c2c2" stroke-width="1.9" stroke-linecap="round"/>
<path d="M493.6 75L498.4 65.4L505.6 63.2" fill="none" stroke="#7f7f7f" stroke-width="1.1"/><circle cx="493.6" cy="75" r="1.1" fill="none" stroke="#7f7f7f" stroke-width="0.8"/><circle cx="505.8" cy="63.2" r="1.1" fill="none" stroke="#7f7f7f" stroke-width="0.8"/><path d="M499.4 67.6L504.4 72L502.2 72.2L503.4 75L502.4 75.4L501.2 72.6L499.6 74Z" fill="#7f7f7f"/>
<path d="M526.4 75L537.6 63.4" fill="none" stroke="#7f7f7f" stroke-width="1.1"/><circle cx="526.2" cy="75.2" r="1.1" fill="none" stroke="#7f7f7f" stroke-width="0.8"/><circle cx="537.8" cy="63.2" r="1.1" fill="none" stroke="#7f7f7f" stroke-width="0.8"/><circle cx="532" cy="69.2" r="1.1" fill="#7f7f7f"/><path d="M534.4 71.2H539.6M537 68.6V73.8" stroke="#7f7f7f" stroke-width="1.1"/>
<path d="M558.8 73.8L572.6 61" fill="none" stroke="#7f7f7f" stroke-width="1.1"/><path d="M561.4 75.4L571 67.4M564 70L571.6 72.6" fill="none" stroke="#7f7f7f" stroke-width="0.9"/><circle cx="571.8" cy="66.8" r="1.3" fill="none" stroke="#7f7f7f" stroke-width="0.8"/><circle cx="572.6" cy="72.8" r="1.3" fill="none" stroke="#7f7f7f" stroke-width="0.8"/>
<rect x="591.5" y="62.5" width="13.6" height="13.2" rx="2.2" fill="none" stroke="#c2c2c2" stroke-width="1.5"/><circle cx="605.3" cy="69" r="2.4" fill="#c2c2c2" stroke="#474747" stroke-width="0.9"/>
<circle cx="679" cy="68" r="5.5" fill="none" stroke="#c2c2c2" stroke-width="1.6"/><path d="M683.2 72.4L688 76.4" stroke="#c2c2c2" stroke-width="2" stroke-linecap="round"/>
<path d="M708.4 68.2Q707.2 66.4 706 67.2Q705 68 706 69.8L709.4 76Q711 78.8 714.6 78.8Q719.4 78.8 720.6 74.6L722.4 67.2Q722.8 65.6 721.6 65.4Q720.6 65.2 720.2 66.6L719.4 69.4L719.6 63Q719.6 61.6 718.5 61.6Q717.4 61.6 717.3 63L716.8 68.6L716.2 61.2Q716.1 59.8 715 59.8Q713.9 59.8 713.9 61.2L713.9 68.6L712.6 62.4Q712.3 61 711.2 61.2Q710.1 61.4 710.4 62.8L711.4 71.6Z" fill="#c2c2c2"/>
<circle cx="747" cy="62.9" r="3.5" fill="#7f7f7f"/><rect x="745.1" y="64.5" width="3.8" height="5.5" fill="#7f7f7f"/><path d="M737.4 74.7Q737.4 68.9 743.4 68.9H750.6Q756.6 68.9 756.6 74.7Z" fill="#7f7f7f"/><rect x="739.6" y="75.3" width="14.8" height="2.6" rx="1.2" fill="#727272"/>
<path d="M772 77.6L772.6 74.8L780.6 66.8L783 69.2L775 77.2Z" fill="none" stroke="#c2c2c2" stroke-width="1.1" stroke-linejoin="round"/><path d="M779.4 65.6L784.2 70.4L785.4 69.2L784.2 68L787.4 64.8Q789 63.2 787.4 61.6Q785.8 60 784.2 61.6L781 64.8L779.8 63.6Z" fill="#c2c2c2"/>
<g transform="translate(811.4,69.3) rotate(45) scale(0.92)" fill="#c2c2c2"><circle cx="0" cy="-10.4" r="2.7"/><circle cx="0" cy="-10.6" r="0.95" fill="#474747"/><rect x="-1.5" y="-8.4" width="3" height="4.2"/><rect x="-5.3" y="-4.8" width="10.6" height="3.2" rx="0.5"/><path d="M-5.3 -0.7H5.3V4.6Q5.3 6.6 3.4 6.6H2.4V3.6L0.9 6.6H-1.6V3L-3.2 6.6H-5.3Z"/></g>
<path d="M840.6 60.6V73.8H853M836.4 64.6H849V78" fill="none" stroke="#7f7f7f" stroke-width="1.5"/>
<circle cx="930.7" cy="69" r="7.9" fill="none" stroke="#c2c2c2" stroke-width="1.3"/><path d="M927 69H934.4" stroke="#c2c2c2" stroke-width="1.6"/><rect x="953.8" y="66.9" width="89.3" height="4.2" rx="2.1" fill="#5d5d5d"/><rect x="953.8" y="66.9" width="26" height="4.2" rx="2.1" fill="#1a6cf0"/><circle cx="979.6" cy="68.8" r="7.9" fill="#b2b2b2"/><circle cx="1063.5" cy="69" r="7.9" fill="none" stroke="#c2c2c2" stroke-width="1.3"/><path d="M1059.8 69H1067.2M1063.5 65.3V72.7" stroke="#c2c2c2" stroke-width="1.6"/>
<rect x="227.5" y="82.8" width="1166.5" height="2.4" fill="#505052"/>
<rect x="227.5" y="85.2" width="1166.5" height="16.2" fill="#636567"/>
<rect x="244.4" y="101.2" width="1150" height="1" fill="#1d1c22"/>
<rect x="227.5" y="85.2" width="17" height="651.2" fill="#636567"/>
<rect x="244.3" y="101.2" width="0.9" height="635.2" fill="#1d1c22"/>
<g stroke="#161618" stroke-width="1"><line x1="261.29" y1="96.4" x2="261.29" y2="101.6" stroke-width="1"/><line x1="301.58" y1="96.4" x2="301.58" y2="101.6" stroke-width="1"/><line x1="341.87" y1="96.4" x2="341.87" y2="101.6" stroke-width="1"/><line x1="382.16" y1="96.4" x2="382.16" y2="101.6" stroke-width="1"/><line x1="422.45" y1="93.0" x2="422.45" y2="101.6" stroke-width="1.5"/><line x1="462.74" y1="96.4" x2="462.74" y2="101.6" stroke-width="1"/><line x1="503.03" y1="96.4" x2="503.03" y2="101.6" stroke-width="1"/><line x1="543.32" y1="96.4" x2="543.32" y2="101.6" stroke-width="1"/><line x1="583.61" y1="96.4" x2="583.61" y2="101.6" stroke-width="1"/><line x1="623.90" y1="90.2" x2="623.90" y2="101.6" stroke-width="1.2"/><line x1="664.19" y1="96.4" x2="664.19" y2="101.6" stroke-width="1"/><line x1="704.48" y1="96.4" x2="704.48" y2="101.6" stroke-width="1"/><line x1="744.77" y1="96.4" x2="744.77" y2="101.6" stroke-width="1"/><line x1="785.06" y1="96.4" x2="785.06" y2="101.6" stroke-width="1"/><line x1="825.35" y1="93.0" x2="825.35" y2="101.6" stroke-width="1.5"/><line x1="865.64" y1="96.4" x2="865.64" y2="101.6" stroke-width="1"/><line x1="905.93" y1="96.4" x2="905.93" y2="101.6" stroke-width="1"/><line x1="946.22" y1="96.4" x2="946.22" y2="101.6" stroke-width="1"/><line x1="986.51" y1="96.4" x2="986.51" y2="101.6" stroke-width="1"/><line x1="1026.80" y1="90.2" x2="1026.80" y2="101.6" stroke-width="1.2"/><line x1="1067.09" y1="96.4" x2="1067.09" y2="101.6" stroke-width="1"/><line x1="1107.38" y1="96.4" x2="1107.38" y2="101.6" stroke-width="1"/><line x1="1147.67" y1="96.4" x2="1147.67" y2="101.6" stroke-width="1"/><line x1="1187.96" y1="96.4" x2="1187.96" y2="101.6" stroke-width="1"/><line x1="1228.25" y1="93.0" x2="1228.25" y2="101.6" stroke-width="1.5"/><line x1="1268.54" y1="96.4" x2="1268.54" y2="101.6" stroke-width="1"/><line x1="1308.83" y1="96.4" x2="1308.83" y2="101.6" stroke-width="1"/><line x1="1349.12" y1="96.4" x2="1349.12" y2="101.6" stroke-width="1"/><line x1="1389.41" y1="96.4" x2="1389.41" y2="101.6" stroke-width="1"/><line x1="239.0" y1="128.51" x2="244.6" y2="128.51" stroke-width="1"/><line x1="239.0" y1="168.82" x2="244.6" y2="168.82" stroke-width="1"/><line x1="239.0" y1="209.13" x2="244.6" y2="209.13" stroke-width="1"/><line x1="239.0" y1="249.44" x2="244.6" y2="249.44" stroke-width="1"/><line x1="236.0" y1="289.75" x2="244.6" y2="289.75" stroke-width="1.5"/><line x1="239.0" y1="330.06" x2="244.6" y2="330.06" stroke-width="1"/><line x1="239.0" y1="370.37" x2="244.6" y2="370.37" stroke-width="1"/><line x1="239.0" y1="410.68" x2="244.6" y2="410.68" stroke-width="1"/><line x1="239.0" y1="450.99" x2="244.6" y2="450.99" stroke-width="1"/><line x1="232.8" y1="491.30" x2="244.6" y2="491.30" stroke-width="1.2"/><line x1="239.0" y1="531.61" x2="244.6" y2="531.61" stroke-width="1"/><line x1="239.0" y1="571.92" x2="244.6" y2="571.92" stroke-width="1"/><line x1="239.0" y1="612.23" x2="244.6" y2="612.23" stroke-width="1"/><line x1="239.0" y1="652.54" x2="244.6" y2="652.54" stroke-width="1"/><line x1="236.0" y1="692.85" x2="244.6" y2="692.85" stroke-width="1.5"/><line x1="239.0" y1="733.16" x2="244.6" y2="733.16" stroke-width="1"/></g>
<text class="rul" x="625.9" y="94.6" textLength="17.4" lengthAdjust="spacingAndGlyphs">0.08</text>
<text class="rul" x="1028.6" y="94.6" textLength="17.4" lengthAdjust="spacingAndGlyphs">0.16</text>
<text class="rul" transform="translate(237.3,488.9) rotate(-90)" textLength="17.4" lengthAdjust="spacingAndGlyphs">0.08</text>
<rect x="226.4" y="83.7" width="16.6" height="16" fill="#221f2c" stroke="#b9b9be" stroke-width="0.9"/>
<text x="234.7" y="95.3" font-size="9.5" fill="#f2f2f2" text-anchor="middle">m</text>
<rect x="224.2" y="736.3" width="1170" height="3" fill="#221f2b"/>
<rect x="224.2" y="739.2" width="1170" height="19.3" fill="#474747"/>
<rect x="227" y="740" width="142.5" height="17.3" fill="#5b5b5b" stroke="#6a6a6a" stroke-width="0.6"/>
<text x="230" y="752.6" font-size="11.3" fill="#ececec" stroke="#ececec" stroke-width="0.2" textLength="26" lengthAdjust="spacingAndGlyphs">100%</text>
<path d="M355.6 746.4 L359 743.2 L362.4 746.4 M355.6 750.6 L359 753.8 L362.4 750.6" fill="none" stroke="#e4e4e4" stroke-width="1.3" stroke-linecap="round" stroke-linejoin="round"/>
<rect x="0" y="758.5" width="1394" height="18.5" fill="#1f1c28"/>
<text x="13.6" y="770" font-size="12.4" fill="#ebebeb" stroke="#ebebeb" stroke-width="0.25" textLength="31.6" lengthAdjust="spacingAndGlyphs">Ready</text>
<text x="547" y="770" font-size="12.4" fill="#ebebeb" stroke="#ebebeb" stroke-width="0.25" textLength="119" lengthAdjust="spacingAndGlyphs">M: [ 3.1e-02, 9.0e-02 ]</text>
<g><rect x="1362.3" y="742.2" width="14.8" height="13.4" fill="#5c5c60" stroke="#6d6d70" stroke-width="0.5"/><rect x="1367.2" y="746.4" width="5" height="5" fill="#a6cdf4"/><path d="M1369.7 743.4 l2.2 2.2 h-4.4z M1369.7 754.6 l2.2 -2.2 h-4.4z M1364 748.9 l2.2 -2.2 v4.4z M1375.4 748.9 l-2.2 -2.2 v4.4z" fill="#2f7df0"/><rect x="1379.2" y="742.2" width="14.3" height="13.4" fill="#5c5c60" stroke="#6d6d70" stroke-width="0.5"/><path d="M1380.2 743.2h2.4v1h-1.4v1.4h-1z M1392.2 743.2h-2.4v1h1.4v1.4h1z M1380.2 754.6h2.4v-1h-1.4v-1.4h-1z M1392.2 754.6h-2.4v-1h1.4v-1.4h1z" fill="#2f7df0"/><rect x="1381.6" y="744.2" width="9.4" height="9.6" rx="3" fill="#9aa3b4"/><rect x="1384.3" y="745.6" width="3.6" height="6.6" rx="0.6" fill="#ffffff"/></g>
<rect x="0.5" y="0.5" width="1393" height="776" rx="9.5" fill="none" stroke="#ffffff" stroke-opacity="0.2" stroke-width="1"/>
</g>
</svg>
</body></html>
